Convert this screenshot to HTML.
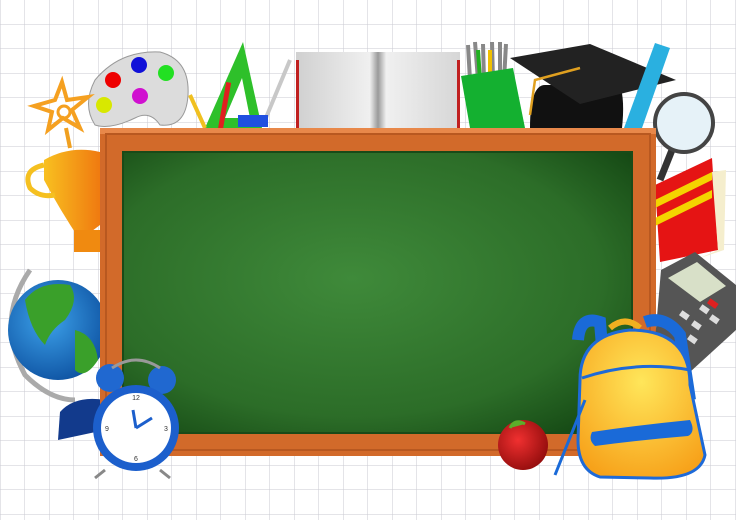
<!DOCTYPE html>
<html><head><style>
html,body{margin:0;padding:0;width:736px;height:520px;overflow:hidden;background:#fff}
svg{display:block}
</style></head><body>
<svg width="736" height="520" viewBox="0 0 736 520" xmlns="http://www.w3.org/2000/svg">
<defs>
<pattern id="grid" width="24.5" height="24.5" patternUnits="userSpaceOnUse" x="0.5" y="0">
<path d="M24.5 0V24.5M0 24.5H24.5" stroke="#cacad2" stroke-width="1" fill="none"/>
</pattern>
<radialGradient id="board" cx="0.45" cy="0.45" r="0.7">
<stop offset="0" stop-color="#3f8a3a"/><stop offset="0.7" stop-color="#2c6d28"/><stop offset="1" stop-color="#164a15"/>
</radialGradient>
<linearGradient id="book" x1="0" x2="1"><stop offset="0" stop-color="#d0d0d0"/><stop offset="0.45" stop-color="#f0f0f0"/><stop offset="0.5" stop-color="#9a9a9a"/><stop offset="0.55" stop-color="#f0f0f0"/><stop offset="1" stop-color="#d6d6d6"/></linearGradient>
<radialGradient id="bag" cx="0.5" cy="0.35" r="0.7"><stop offset="0" stop-color="#ffe65a"/><stop offset="1" stop-color="#f7a21a"/></radialGradient>
<radialGradient id="globe" cx="0.4" cy="0.4" r="0.7"><stop offset="0" stop-color="#3da2ea"/><stop offset="1" stop-color="#0a4c9c"/></radialGradient>
<radialGradient id="apple" cx="0.4" cy="0.4" r="0.7"><stop offset="0" stop-color="#f03030"/><stop offset="1" stop-color="#8c0a0a"/></radialGradient>
<linearGradient id="cup" x1="0" x2="1"><stop offset="0" stop-color="#f8c020"/><stop offset="1" stop-color="#f07a10"/></linearGradient>
</defs>
<rect width="736" height="520" fill="url(#grid)"/>

<!-- palette -->
<path d="M95 80 Q120 50 160 52 Q190 60 188 95 Q186 128 160 125 Q150 110 135 118 Q110 130 95 125 Q82 105 95 80Z" fill="#dcdcdc" stroke="#999"/>
<circle cx="139" cy="65" r="8" fill="#1010d8"/><circle cx="166" cy="73" r="8" fill="#22e022"/>
<circle cx="113" cy="80" r="8" fill="#e00"/><circle cx="140" cy="96" r="8" fill="#d010d0"/><circle cx="104" cy="105" r="8" fill="#d8e800"/>
<!-- star trophy -->
<path d="M62 82 L67 100 L88 97 L72 110 L80 128 L63 118 L48 130 L52 112 L34 106 L55 100Z" fill="none" stroke="#f5a020" stroke-width="4"/>
<circle cx="64" cy="112" r="6" fill="none" stroke="#f5a020" stroke-width="3"/>
<path d="M66 128 L70 148" stroke="#f0a020" stroke-width="4"/>
<path d="M44 160 Q70 145 100 152 L100 225 L80 240 Q60 210 44 180Z" fill="url(#cup)"/>
<rect x="74" y="230" width="26" height="22" fill="#f08a10"/>
<path d="M44 165 Q22 170 30 188 Q40 198 55 195" stroke="#f5c020" stroke-width="5" fill="none"/>
<!-- triangle -->
<path d="M205 128 L243 42 L262 128Z" fill="#2ec02a"/><path d="M225 118 L242 78 L250 118Z" fill="#fff"/>
<rect x="222" y="82" width="5" height="48" fill="#e02020" transform="rotate(10 224 106)"/>
<path d="M190 95 L205 128" stroke="#f0c020" stroke-width="4"/>
<path d="M265 120 L290 60" stroke="#c8c8c8" stroke-width="4"/>
<rect x="238" y="115" width="30" height="12" fill="#2050e0"/>
<!-- book -->
<rect x="296" y="52" width="164" height="77" fill="url(#book)"/>
<rect x="296" y="60" width="3" height="68" fill="#c02020"/><rect x="457" y="60" width="3" height="68" fill="#c02020"/>
<!-- pencil cup -->
<path d="M468 45 L470 80 M475 42 L478 80 M483 44 L484 80 M492 42 L493 80 M500 42 L500 80 M506 44 L504 80" stroke-width="4" stroke="#888"/>
<path d="M478 50 L480 80" stroke="#20b020" stroke-width="4"/><path d="M490 50 L490 80" stroke="#f0c000" stroke-width="4"/>
<path d="M461 76 L513 68 L525 128 L470 128Z" fill="#14b030"/>
<!-- cap -->
<path d="M530 128 Q530 85 545 85 L620 85 Q625 100 622 128Z" fill="#111"/>
<path d="M510 58 L590 44 L676 80 L580 104Z" fill="#222"/>
<path d="M580 68 L535 80 L530 115" stroke="#e0a020" stroke-width="2.5" fill="none"/>
<!-- ruler -->
<path d="M624 128 L655 43 L670 48 L642 128Z" fill="#2ab0e0"/>
<!-- magnifier -->
<path d="M672 150 L660 180" stroke="#333" stroke-width="7"/>
<circle cx="684" cy="123" r="29" fill="#e6f2f8" stroke="#444" stroke-width="4"/>
<!-- red book -->
<path d="M655 185 L712 158 L718 250 L660 262Z" fill="#e51414"/>
<path d="M655 200 L712 172 L712 180 L655 208Z M655 218 L712 190 L712 198 L655 226Z" fill="#f4d400"/>
<path d="M712 172 L726 170 L724 250 L700 258 L718 250Z" fill="#f5eecd"/>
<!-- globe -->
<path d="M30 270 Q-5 320 25 375 Q50 400 75 400" stroke="#aaa" stroke-width="5" fill="none"/>
<circle cx="58" cy="330" r="50" fill="url(#globe)"/>
<path d="M25 300 Q40 280 70 285 Q80 300 65 320 Q50 330 45 345 Q30 330 25 300Z M75 330 Q95 335 98 360 Q85 380 75 370Z" fill="#3aa02a"/>
<path d="M60 412 Q75 395 105 400 L105 430 L58 440Z" fill="#123a8c"/>

<!-- frame -->
<rect x="100" y="128" width="556" height="328" fill="#d26a2a"/>
<rect x="100" y="128" width="556" height="6" fill="#e8884a"/>
<rect x="106" y="134" width="544" height="316" fill="none" stroke="#b85820" stroke-width="2"/>
<rect x="123" y="152" width="509" height="281" fill="url(#board)"/>
<rect x="123" y="152" width="509" height="281" fill="none" stroke="#1a4a18" stroke-width="2"/>

<!-- calculator -->
<path d="M661 270 L695 252 L736 285 L736 330 L690 372 L655 340Z" fill="#555"/>
<path d="M668 278 L697 262 L726 286 L700 302Z" fill="#d8e0c8"/>
<g fill="#ddd"><rect x="680" y="312" width="9" height="6" transform="rotate(35 684 315)"/><rect x="692" y="322" width="9" height="6" transform="rotate(35 696 325)"/><rect x="700" y="306" width="9" height="6" transform="rotate(35 704 309)"/><rect x="710" y="316" width="9" height="6" transform="rotate(35 714 319)"/><rect x="688" y="336" width="9" height="6" transform="rotate(35 692 339)"/></g>
<rect x="708" y="300" width="10" height="6" fill="#e02020" transform="rotate(35 712 303)"/>

<!-- backpack -->
<path d="M578 340 Q580 315 600 322 L606 395" stroke="#1a6ad8" stroke-width="12" fill="none"/>
<path d="M645 322 Q665 315 680 335 L690 400" stroke="#1a6ad8" stroke-width="12" fill="none"/>
<path d="M610 328 Q625 315 640 328" stroke="#f0b020" stroke-width="6" fill="none"/>
<path d="M580 380 Q580 335 630 330 Q690 330 690 385 L705 455 Q700 480 650 478 L600 477 Q578 470 578 440Z" fill="url(#bag)" stroke="#1e6ad8" stroke-width="3"/>
<path d="M582 378 Q635 360 690 370" stroke="#1e6ad8" stroke-width="3" fill="none"/>
<path d="M592 432 Q640 425 690 420 Q696 432 688 436 Q640 440 595 446 Q588 440 592 432Z" fill="#1a6ad8"/>
<path d="M555 475 L585 400" stroke="#1a6ad8" stroke-width="3"/>
<!-- apple -->
<circle cx="523" cy="445" r="25" fill="url(#apple)"/>
<path d="M510 428 Q515 418 525 424" fill="#5cae2a" stroke="#5cae2a" stroke-width="3"/>
<!-- clock -->
<path d="M105 470 L95 478 M160 470 L170 478" stroke="#888" stroke-width="3"/>
<circle cx="110" cy="378" r="14" fill="#2068d0"/><circle cx="162" cy="380" r="14" fill="#2068d0"/>
<path d="M112 368 Q136 352 160 368" stroke="#999" stroke-width="3" fill="none"/>
<circle cx="136" cy="428" r="43" fill="#1c5fcc"/>
<circle cx="136" cy="428" r="35" fill="#fff"/>
<g font-family="Liberation Sans, sans-serif" font-size="7" fill="#333" text-anchor="middle">
<text x="136" y="400">12</text><text x="166" y="431">3</text><text x="136" y="461">6</text><text x="107" y="431">9</text></g>
<path d="M136 428 L133 410 M136 428 L152 418" stroke="#1c5fcc" stroke-width="3"/>
</svg>
</body></html>
